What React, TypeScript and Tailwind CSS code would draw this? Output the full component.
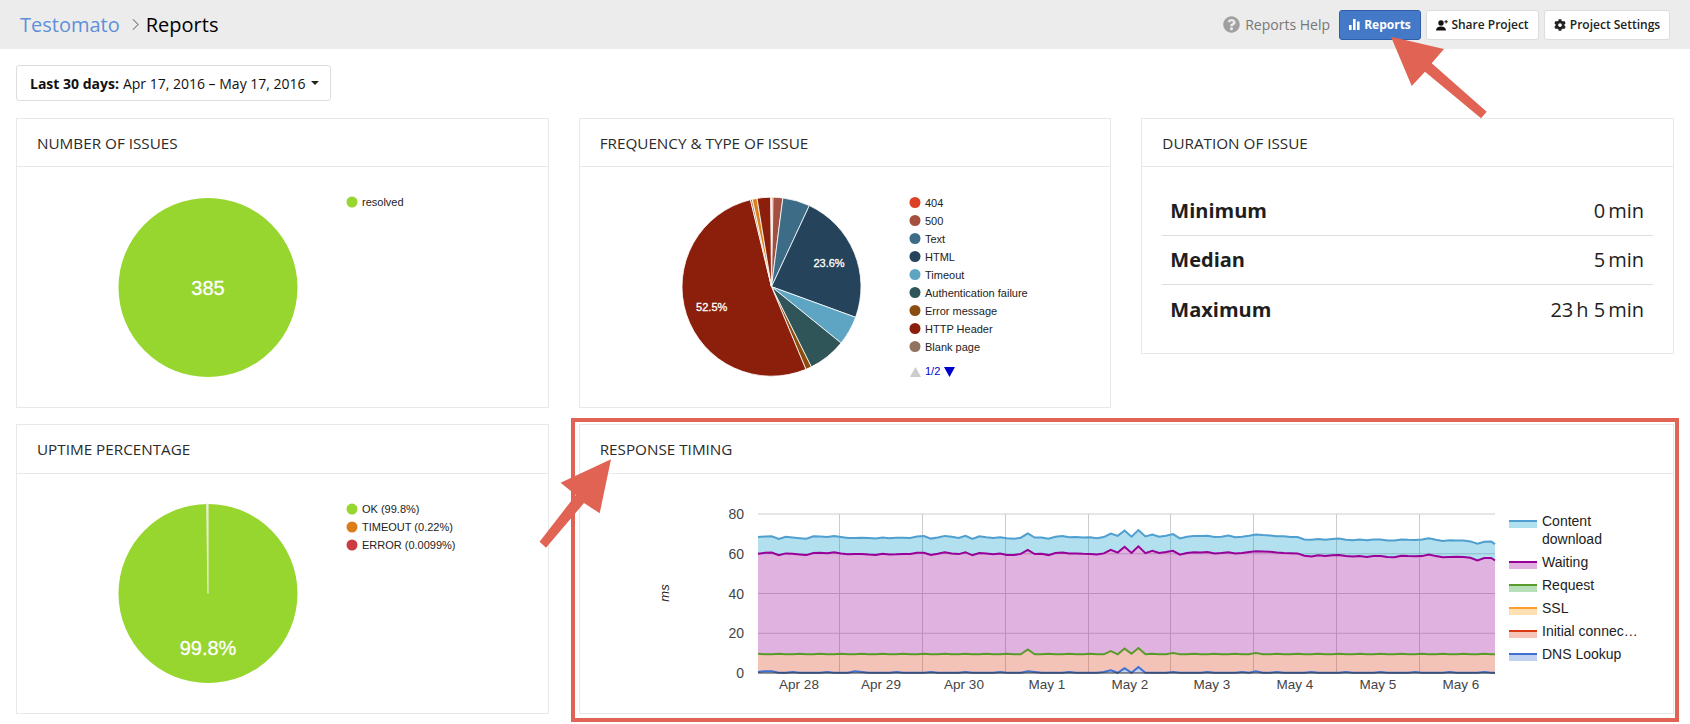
import { FaCog, FaQuestionCircle } from 'react-icons/fa';

const polar = (cx: number, cy: number, r: number, deg: number) => {
  const a = ((deg - 90) * Math.PI) / 180;
  return [cx + r * Math.cos(a), cy + r * Math.sin(a)];
};

const slicePath = (cx: number, cy: number, r: number, from: number, to: number) => {
  const [x1, y1] = polar(cx, cy, r, from);
  const [x2, y2] = polar(cx, cy, r, to);
  const large = to - from > 180 ? 1 : 0;
  return `M${cx} ${cy}L${x1.toFixed(2)} ${y1.toFixed(2)}A${r} ${r} 0 ${large} 1 ${x2.toFixed(2)} ${y2.toFixed(2)}Z`;
};

const Card = ({
  title,
  tall,
  className,
  children,
}: {
  title: string;
  tall?: boolean;
  className?: string;
  children: React.ReactNode;
}) => (
  <div className={`relative border border-[#e8e8e8] bg-white ${className ?? ''}`}>
    <h2
      className={`border-b border-[#e8e8e8] px-[20px] text-[15.25px] leading-[48px] text-[#2b2b2b] uppercase ${
        tall ? 'h-[49px]' : 'h-[48px]'
      }`}
    >
      {title}
    </h2>
    {children}
  </div>
);

const chartFont = { fontFamily: '"Liberation Sans", Arial, sans-serif' };

const LegendDot = ({ y, x, color, label }: { y: number; x: number; color: string; label: string }) => (
  <g>
    <circle cx={x} cy={y} r={5.5} fill={color} />
    <text x={x + 10} y={y + 4} fontSize={11} fill="#222" style={chartFont}>
      {label}
    </text>
  </g>
);

const IssuesPie = () => (
  <svg viewBox="17 167 531 240" className="block h-[240px] w-[531px]">
    <circle cx={208} cy={287.5} r={89.5} fill="#97d52f" />
    <text x={208} y={295} textAnchor="middle" fontSize={20} fill="#fff" stroke="#fff" strokeWidth={0.3} style={chartFont}>
      385
    </text>
    <LegendDot x={352} y={202} color="#97d52f" label="resolved" />
  </svg>
);

const frequency = [
  { from: 0, to: 1, color: '#dc4126' },
  { from: 1, to: 7.3, color: '#a35040' },
  { from: 7.3, to: 25, color: '#3d6c87' },
  { from: 25, to: 110, color: '#25435a' },
  { from: 110, to: 129, color: '#5ea5c4' },
  { from: 129, to: 153.6, color: '#2f5558' },
  { from: 153.6, to: 157.4, color: '#8a4d0f' },
  { from: 157.4, to: 346.4, color: '#8c1f0b' },
  { from: 346.4, to: 347.6, color: '#927261' },
  { from: 347.6, to: 350.7, color: '#dc8019' },
  { from: 350.7, to: 359.4, color: '#8c1f0b' },
];

const frequencyLegend = [
  ['404', '#dc4126'],
  ['500', '#a35040'],
  ['Text', '#3d6c87'],
  ['HTML', '#25435a'],
  ['Timeout', '#5ea5c4'],
  ['Authentication failure', '#2f5558'],
  ['Error message', '#8a4d0f'],
  ['HTTP Header', '#8c1f0b'],
  ['Blank page', '#927261'],
];

const FrequencyPie = () => (
  <svg viewBox="580 167 530 240" className="block h-[240px] w-[530px]">
    {frequency.map((s) => (
      <path key={s.from} d={slicePath(771.5, 286.7, 89.5, s.from, s.to)} fill={s.color} stroke="#fff" strokeWidth={0.8} />
    ))}
    <g fontSize={11} fill="#fff" textAnchor="middle" style={chartFont} stroke="#fff" strokeWidth={0.3}>
      <text x={829} y={267}>23.6%</text>
      <text x={711.7} y={311}>52.5%</text>
    </g>
    {frequencyLegend.map(([label, color], i) => (
      <LegendDot key={label} x={915} y={202.5 + i * 18} color={color} label={label} />
    ))}
    <path d="M910 377L921 377L915.5 367Z" fill="#ccc" />
    <text x={925} y={375} fontSize={11} fill="#0000cc" style={chartFont}>
      1/2
    </text>
    <path d="M944 367L955 367L949.5 377Z" fill="#0000cc" />
  </svg>
);

const UptimePie = () => (
  <svg viewBox="17 474 531 240" className="block h-[240px] w-[531px]">
    <circle cx={208} cy={593.5} r={89.5} fill="#97d52f" />
    <path d={slicePath(208, 593.5, 89.5, 359.2, 360)} fill="#e6efcf" stroke="#e6efcf" strokeWidth={1.2} />
    <text x={208} y={655} textAnchor="middle" fontSize={20} fill="#fff" stroke="#fff" strokeWidth={0.3} style={chartFont}>
      99.8%
    </text>
    <LegendDot x={352} y={509} color="#97d52f" label="OK (99.8%)" />
    <LegendDot x={352} y={527} color="#dc7d19" label="TIMEOUT (0.22%)" />
    <LegendDot x={352} y={545} color="#cc3b41" label="ERROR (0.0099%)" />
  </svg>
);

// one value per plot step, read off the reference
const waitingSeries = [
  60, 60.5, 60.6, 59.2, 60.2, 60, 59.6, 59.3, 60.4, 60.5, 60.3, 60.8, 60.1, 59.7, 59.8, 59.9, 59.6, 59.4, 60, 59.6, 59.7,
  59.9, 59.8, 60.5, 60.5, 59.4, 60, 60.8, 60.2, 59.8, 60.8, 59.2, 60.4, 60.1, 59.7, 60.1, 59.4, 59.3, 59.9, 62, 59.8,
  60, 59.3, 60.4, 60.6, 60.1, 60.2, 60, 59.9, 59.6, 60.2, 62, 60.6, 63.5, 60.4, 63.7, 60.3, 61.5, 60.4, 60.9, 61.5,
  59.5, 60.4, 60.8, 60.6, 60.9, 60.2, 60.4, 60.8, 60.1, 60.4, 60.9, 61.3, 61.2, 61, 60.6, 60.4, 60.3, 60.2, 59, 58.6,
  59.2, 58.8, 59.2, 59.3, 58.8, 58.6, 58.9, 58.4, 58.9, 58.9, 58.4, 58.2, 59, 58.8, 58.7, 58.8, 59.6, 58.8, 58.2, 58.4,
  58.5, 58.4, 58, 56.6, 57.8, 57.9, 56.6,
];

const pts = waitingSeries.map((v, i) => ({
  x: Math.min(758 + i * 6.917, 1495),
  waiting: v,
}));

const spike = (i: number) => {
  if (i === 39) return 2.4;
  if (i === 51) return 1.6;
  if (i === 53) return 2.9;
  if (i === 55) return 3.2;
  if (i === 60 || i === 72) return 0.6;
  return i % 3 === 0 ? 0.25 : 0;
};

const dnsBump = (i: number) => {
  if (i === 53) return 2.4;
  if (i === 55) return 3;
  if (i === 51) return 1.4;
  if (i === 1 || i === 2 || i === 14 || i === 39 || i === 72) return 0.9;
  return i % 5 === 0 ? 0.5 : 0.1;
};

const yOf = (v: number) => 673 - v * 1.9875;

const linePath = (values: number[]) =>
  values.map((v, i) => `${i === 0 ? 'M' : 'L'}${pts[i].x.toFixed(1)} ${yOf(v).toFixed(1)}`).join('');

const areaPath = (top: number[], bottom: number[]) => {
  const back = bottom
    .map((v, i) => `L${pts[i].x.toFixed(1)} ${yOf(v).toFixed(1)}`)
    .reverse()
    .join('');
  return `${linePath(top)}${back}Z`;
};

const dns = pts.map((_, i) => dnsBump(i));
const initial = pts.map((_, i) => 9 + spike(i));
const request = pts.map((_, i) => 9.4 + spike(i));
const wait = pts.map((p) => p.waiting);
const content = pts.map((p, i) => p.waiting + 8.2 + (i % 4 === 0 ? 0.2 : 0));

const timingLegend = [
  { y: 562, line: '#990099', fill: '#e0b1e0', label: 'Waiting' },
  { y: 585, line: '#5a9a2a', fill: '#b7dfb9', label: 'Request' },
  { y: 608, line: '#ff9d2b', fill: '#ffe0b2', label: 'SSL' },
  { y: 631, line: '#dc3912', fill: '#f5c3b8', label: 'Initial connec…' },
  { y: 654, line: '#3f6fd0', fill: '#c1d1f0', label: 'DNS Lookup' },
];

const TimingChart = () => (
  <svg viewBox="580 474 1093 240" className="block h-[240px] w-[1093px]" style={chartFont}>
    <text
      transform="translate(669 593) rotate(-90)"
      textAnchor="middle"
      fontSize={13}
      fontStyle="italic"
      fill="#222"
    >
      ms
    </text>
    {[80, 60, 40, 20].map((v) => (
      <line key={v} x1={758} x2={1495} y1={yOf(v)} y2={yOf(v)} stroke="#ccc" />
    ))}
    {[839.5, 922.5, 1005.5, 1088.5, 1170.5, 1253.5, 1336.5, 1419.5].map((x) => (
      <line key={x} x1={x} x2={x} y1={514} y2={673} stroke="#ccc" />
    ))}
    <path d={areaPath(content, wait)} fill="#0099c6" fillOpacity={0.3} />
    <path d={areaPath(wait, request)} fill="#990099" fillOpacity={0.3} />
    <path d={areaPath(initial, dns)} fill="#dc3912" fillOpacity={0.3} />
    <path d={areaPath(dns, dns.map(() => 0))} fill="#3366cc" fillOpacity={0.3} />
    <path d={linePath(content)} fill="none" stroke="#4f9fd0" strokeWidth={2} />
    <path d={linePath(wait)} fill="none" stroke="#990099" strokeWidth={2} />
    <path d={linePath(request)} fill="none" stroke="#5a9a2a" strokeWidth={2} />
    <path d={linePath(dns)} fill="none" stroke="#3f6fd0" strokeWidth={2} />
    <line x1={758} x2={1495} y1={673} y2={673} stroke="#333" strokeWidth={1} />
    <g fontSize={14} fill="#444" textAnchor="end">
      {[80, 60, 40, 20, 0].map((v) => (
        <text key={v} x={744} y={yOf(v) + 5}>
          {v}
        </text>
      ))}
    </g>
    <g fontSize={13.5} fill="#444" textAnchor="middle">
      {[
        ['Apr 28', 799],
        ['Apr 29', 881],
        ['Apr 30', 964],
        ['May 1', 1047],
        ['May 2', 1130],
        ['May 3', 1212],
        ['May 4', 1295],
        ['May 5', 1378],
        ['May 6', 1461],
      ].map(([label, x]) => (
        <text key={label} x={x} y={689}>
          {label}
        </text>
      ))}
    </g>
    <g fontSize={14} fill="#222">
      <rect x={1509} y={521} width={28} height={7} fill="#b1e0ee" />
      <rect x={1509} y={520} width={28} height={2} fill="#4f9fd0" />
      <text x={1542} y={526}>Content</text>
      <text x={1542} y={544}>download</text>
      {timingLegend.map((l) => (
        <g key={l.label}>
          <rect x={1509} y={l.y} width={28} height={7} fill={l.fill} />
          <rect x={1509} y={l.y - 1} width={28} height={2} fill={l.line} />
          <text x={1542} y={l.y + 5}>{l.label}</text>
        </g>
      ))}
    </g>
  </svg>
);

const Row = ({ label, value, last }: { label: string; value: React.ReactNode; last?: boolean }) => (
  <div
    className={`flex h-[49px] items-center justify-between pr-[9px] pl-[8px] text-[20px] text-[#1e1e1e] ${
      last ? '' : 'border-b border-[#ddd]'
    }`}
  >
    <span className="font-bold">{label}</span>
    <span>{value}</span>
  </div>
);

const Unit = ({ children }: { children: React.ReactNode }) => <span className="ml-[3px]">{children}</span>;

const ReportsIcon = () => (
  <svg viewBox="0 0 11 11" className="h-[11px] w-[11px] fill-white">
    <rect x={0} y={6} width={2.6} height={5} />
    <rect x={4} y={0} width={2.6} height={11} />
    <rect x={8} y={2.5} width={2.6} height={8.5} />
  </svg>
);

const ShareIcon = () => (
  <svg viewBox="0 0 12 12" className="h-[12px] w-[12px] fill-[#111]">
    <circle cx={5} cy={4} r={2.7} />
    <path d="M0 11.6C0 8.6 2 7.4 5 7.4S10 8.6 10 11.6Z" />
    <path d="M9.6 1H10.6V2.2H11.8V3.2H10.6V4.4H9.6V3.2H8.4V2.2H9.6Z" />
  </svg>
);

const Arrows = () => (
  <svg viewBox="0 0 1690 724" className="pointer-events-none absolute top-0 left-0 h-[724px] w-[1690px]">
    <polygon
      points="1391,36.7 1444,49 1431.7,63.3 1486.7,111.7 1481,118.3 1425,71.7 1411.7,86"
      fill="#e06353"
    />
    <polygon
      points="611,459.3 560.6,482.7 575.8,495 539.6,541.7 546,547.7 584,503 599.7,513.3"
      fill="#e06353"
    />
  </svg>
);

export default function App() {
  return (
    <div className="relative h-[724px] w-[1690px] overflow-hidden bg-white font-['Open_Sans',sans-serif]">
      <header className="flex h-[49px] items-center justify-between bg-[#ececec] px-[20px]">
        <div className="flex items-center text-[20px]">
          <span className="text-[#5f8fd8]">Testomato</span>
          <svg viewBox="0 0 8 14" className="mr-[7px] ml-[12px] h-[13px] w-[7px] fill-none stroke-[#777] stroke-[1.2]">
            <path d="M1 1l6 6-6 6" />
          </svg>
          <span className="text-black">Reports</span>
        </div>
        <div className="flex items-center">
          <FaQuestionCircle className="mr-[5px] text-[17px] text-[#a0a0a0]" />
          <span className="mr-[9px] text-[14px] text-[#777]">Reports Help</span>
          <button className="flex h-[30px] w-[82px] items-center justify-center gap-[4px] rounded-[3px] border border-[#2f5ea8] bg-[#4479c8] text-[12px] font-bold text-white">
            <ReportsIcon />
            Reports
          </button>
          <button className="ml-[5px] flex h-[30px] w-[113px] items-center justify-center gap-[3px] rounded-[3px] border border-[#ddd] bg-white text-[12px] font-semibold text-[#222]">
            <ShareIcon />
            Share Project
          </button>
          <button className="ml-[5px] flex h-[30px] w-[126px] items-center justify-center gap-[4px] rounded-[3px] border border-[#ddd] bg-white text-[12px] font-semibold text-[#222]">
            <FaCog className="text-[12px]" />
            Project Settings
          </button>
        </div>
      </header>

      <div className="px-4 pt-[16px]">
        <button className="flex h-[36px] w-[315px] items-center rounded-[3px] border border-[#ddd] bg-white pl-[13px] text-[14px] text-[#111]">
          <span className="font-bold">Last 30 days:</span>
          <span className="ml-[4px] font-medium">Apr 17, 2016 – May 17, 2016</span>
          <span className="ml-[5px] h-0 w-0 border-x-[4px] border-t-[4px] border-x-transparent border-t-[#222]" />
        </button>

        <div className="mt-[17px] grid grid-cols-3 gap-x-[30px] gap-y-[16px]">
          <Card title="Number of issues" className="h-[290px]">
            <IssuesPie />
          </Card>
          <Card title="Frequency & type of issue" className="h-[290px]">
            <FrequencyPie />
          </Card>
          <Card title="Duration of issue" className="h-[236px]">
            <div className="mx-[20px] mt-[20px]">
              <Row label="Minimum" value={<>0<Unit>min</Unit></>} />
              <Row label="Median" value={<>5<Unit>min</Unit></>} />
              <Row label="Maximum" value={<>23<Unit>h</Unit> 5<Unit>min</Unit></>} last />
            </div>
          </Card>
          <Card tall title="Uptime percentage" className="h-[290px]">
            <UptimePie />
          </Card>
          <Card tall title="Response timing" className="col-span-2 h-[290px]">
            <div className="absolute -top-[7px] -right-[6px] -bottom-[9px] -left-[9px] border-4 border-[#e06353]" />
            <TimingChart />
          </Card>
        </div>
      </div>
      <Arrows />
    </div>
  );
}
